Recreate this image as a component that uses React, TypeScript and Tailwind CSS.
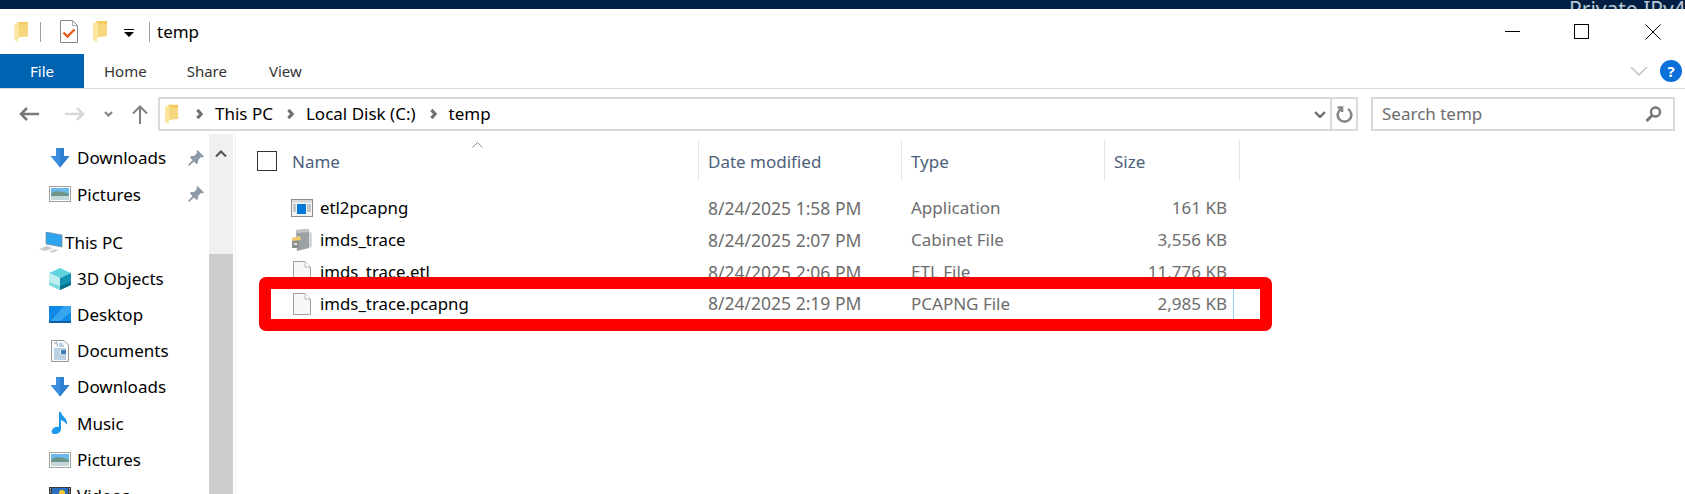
import React from 'react';

const font = { fontFamily: '"Noto Sans", "Open Sans", sans-serif' };

const FolderIcon = ({ className }: { className: string }) => (
  <svg className={className} viewBox="0 0 15 21">
    <path d="M3 0 H14 V15 L3 16 Z" fill="#f3cb60" />
    <path d="M0 2 L5 1 V17 L4 17 V21 L0 19 Z" fill="#fce6a0" />
    <path d="M5 3 H14 V15 L5 16 Z" fill="#f7d77e" />
  </svg>
);

const CheckDocIcon = () => (
  <svg className="h-[23px] w-[18px]" viewBox="0 0 18 23" fill="none">
    <path d="M.5.5 H12.5 L17.5 5.5 V22.5 H.5 Z" fill="#fff" stroke="#858585" />
    <path d="M12.5.5 V5.5 H17.5" stroke="#a8a8a8" />
    <path d="M3.5 12.5 L7.5 16.5 L14.5 9.5" stroke="#ea5a20" strokeWidth="2.4" />
  </svg>
);

const BlankFileIcon = () => (
  <svg className="h-[22px] w-[18px]" viewBox="0 0 18 22" fill="none">
    <path d="M.5.5 H12 L17.5 6 V21.5 H.5 Z" fill="#f7f8f8" stroke="#a0a0a0" />
    <path d="M12 .5 V6 H17.5" fill="#fff" stroke="#b4b4b4" />
  </svg>
);

const AppIcon = () => (
  <svg className="h-[18px] w-[22px]" viewBox="0 0 22 18">
    <rect x=".5" y=".5" width="21" height="17" fill="#f2f2f2" stroke="#8b8b8b" />
    <rect x="1" y="1" width="20" height="2.5" fill="#d8d8d8" />
    <rect x="6" y="5" width="9" height="10" fill="#0078d7" />
    <path d="M2 6h3M2 8h3M2 10h3M2 12h3M16 6h4M16 8h4M16 10h4M16 12h4" stroke="#9a9a9a" />
  </svg>
);

const CabinetIcon = () => (
  <svg className="h-[22px] w-[22px]" viewBox="0 0 22 22">
    <path d="M5 1 L18 0 V19 L6 22 Z" fill="#9aa0a3" />
    <path d="M5 1 L18 0 L18 3 L6 4 Z" fill="#c3c7c9" />
    <path d="M18 2 L21 4 V18 L18 19 Z" fill="#d5d7d8" />
    <path d="M1 9 L8 8 V19 L1 19 Z" fill="#8c8f8e" />
    <path d="M1 9 L9 7 L10 11 L1 12 Z" fill="#f2cd6d" />
    <rect x="3" y="14" width="3" height="2" fill="#e6e6e6" />
  </svg>
);

const DownloadIcon = () => (
  <svg className="h-[20px] w-[20px]" viewBox="0 0 20 20">
    <path d="M6 0 H14 V8 H19.5 L10 19.5 L.5 8 H6 Z" fill="#3a8fe0" />
    <path d="M10 0 H14 V8 H19.5 L10 19.5 Z" fill="#2f80d0" />
  </svg>
);

const PicturesIcon = () => (
  <svg className="h-[16px] w-[22px]" viewBox="0 0 22 16">
    <rect x=".5" y=".5" width="21" height="15" fill="#fff" stroke="#a3a3a3" />
    <rect x="2" y="2" width="18" height="6" fill="#6cb8e8" />
    <path d="M2 8 C6 4 12 5 20 8 V10 H2 Z" fill="#6f9488" />
    <rect x="2" y="10" width="18" height="4" fill="#c2d6dc" />
  </svg>
);

const ObjectsIcon = () => (
  <svg className="h-[22px] w-[22px]" viewBox="0 0 22 22">
    <path d="M11 0 L22 5 L11 10 L0 5 Z" fill="#5fd3e0" />
    <path d="M0 5 L11 10 V22 L0 17 Z" fill="#bfeef0" />
    <path d="M22 5 L11 10 V22 L22 17 Z" fill="#1392b5" />
    <path d="M0 14 L11 18 V22 L0 17 Z" fill="#7fdbe2" />
    <path d="M22 14 L11 18 V22 L22 17 Z" fill="#0b6f8e" />
  </svg>
);

const DesktopIcon = () => (
  <svg className="h-[17px] w-[22px]" viewBox="0 0 22 17">
    <rect width="22" height="17" fill="#0e8ae6" />
    <path d="M0 17 L15 0 H22 V6 L9 17 Z" fill="#36a6f0" />
    <rect y="15" width="22" height="2" fill="#0a5fa8" />
  </svg>
);

const DocumentsIcon = () => (
  <svg className="h-[22px] w-[18px]" viewBox="0 0 18 22" fill="none">
    <path d="M.5.5 H13 L17.5 5 V21.5 H.5 Z" fill="#fafafa" stroke="#9a9a9a" />
    <path d="M3 4l2.5-2 1 4M8 4h4M8 6h5M3 9h12M3 11h6M3 13h6M3 15h12M3 17h12M3 19h12" stroke="#7fa6cf" />
    <rect x="10" y="10" width="5" height="4" fill="#3f7fb5" />
  </svg>
);

const MusicIcon = () => (
  <svg className="h-[22px] w-[18px]" viewBox="0 0 18 22">
    <path d="M8 0 H10 C10 4 17 6 16 13 C15 11 13 9 10 8 V17 C10 20 7 22 4 22 C1 22 0 20 1 18 C2 16 5 14 8 15 Z" fill="#1d97ea" />
  </svg>
);

const VideosIcon = () => (
  <svg className="h-[18px] w-[22px]" viewBox="0 0 22 18">
    <rect width="22" height="18" fill="#3a3a3a" />
    <rect x="3" y="1" width="16" height="16" fill="#2a6fc0" />
    <rect x="3" y="9" width="8" height="8" fill="#d9482b" />
    <rect x="11" y="7" width="8" height="10" fill="#3f9a3a" />
    <circle cx="13" cy="6" r="3" fill="#f5c92f" />
    <path d="M1 2h1M1 5h1M1 8h1M1 11h1M1 14h1M20 2h1M20 5h1M20 8h1M20 11h1M20 14h1" stroke="#fff" />
  </svg>
);

const PinIcon = () => (
  <svg className="h-[16px] w-[16px]" viewBox="0 0 16 16">
    <path d="M9.5 0 L16 6.5 L14.5 7.5 L13 7 L10 10 L10 13 L8.5 14 L2 7.5 L3 6 L6 6 L9 3 L8.5 1.5 Z M4.5 10 L6 11.5 L1 16 L0 15 Z" fill="#8c99a6" />
  </svg>
);

const ThisPcIcon = () => (
  <svg className="h-[21px] w-[24px]" viewBox="0 0 24 21">
    <path d="M7 0 L23 3 V15 L7 12 Z" fill="#2fa4ee" stroke="#7b8a96" strokeWidth=".7" />
    <path d="M0 17 L8 14 L14 16 L6 19 Z" fill="#c9c9c9" />
    <path d="M10 19 L16 17 L20 18 L14 21 Z" fill="#d5d5d5" />
  </svg>
);

const Arrow = ({ className, color, flip }: { className: string; color: string; flip?: boolean }) => (
  <svg className={className} viewBox="0 0 20 14" fill="none" stroke={color} strokeWidth="2.6">
    <path d={flip ? 'M0 7 H18 M12 1 L18 7 L12 13' : 'M20 7 H2 M8 1 L2 7 L8 13'} />
  </svg>
);

const Chevron = ({ className }: { className: string }) => (
  <svg className={className} viewBox="0 0 8 12" fill="none" stroke="#707070" strokeWidth="3.8">
    <path d="M1.5 1 L6 6 L1.5 11" />
  </svg>
);

const sideItems = [
  { label: 'Downloads', icon: <DownloadIcon />, pin: true },
  { label: 'Pictures', icon: <PicturesIcon />, pin: true },
  { label: 'spacer' },
  { label: 'This PC', icon: <ThisPcIcon />, root: true },
  { label: '3D Objects', icon: <ObjectsIcon /> },
  { label: 'Desktop', icon: <DesktopIcon /> },
  { label: 'Documents', icon: <DocumentsIcon /> },
  { label: 'Downloads', icon: <DownloadIcon /> },
  { label: 'Music', icon: <MusicIcon /> },
  { label: 'Pictures', icon: <PicturesIcon /> },
  { label: 'Videos', icon: <VideosIcon /> },
];

const files = [
  { name: 'etl2pcapng', date: '8/24/2025 1:58 PM', type: 'Application', size: '161 KB', icon: <AppIcon /> },
  { name: 'imds_trace', date: '8/24/2025 2:07 PM', type: 'Cabinet File', size: '3,556 KB', icon: <CabinetIcon /> },
  { name: 'imds_trace.etl', date: '8/24/2025 2:06 PM', type: 'ETL File', size: '11,776 KB', icon: <BlankFileIcon /> },
  { name: 'imds_trace.pcapng', date: '8/24/2025 2:19 PM', type: 'PCAPNG File', size: '2,985 KB', icon: <BlankFileIcon /> },
];

export default function App() {
  return (
    <div className="relative h-[494px] w-[1685px] overflow-hidden bg-white text-black" style={font}>
      {/* Desktop strip behind the window */}
      <div className="flex h-[9px] justify-start overflow-hidden bg-[#001f42] pl-[1569px]">
        <span className="-mt-[4px] whitespace-nowrap text-[21px] leading-[26px] text-[#b8c6d6]">Private IPv4</span>
      </div>

      {/* Title bar */}
      <div className="flex h-[45px] items-center">
        <div className="flex w-[40px] justify-center pl-[2px]">
          <FolderIcon className="h-[20px] w-[15px]" />
        </div>
        <div className="h-[20px] w-px bg-[#a0a0a0]" />
        <div className="ml-[19px]"><CheckDocIcon /></div>
        <div className="ml-[15px]"><FolderIcon className="h-[21px] w-[15px]" /></div>
        <div className="ml-[16px] flex flex-col items-center gap-[2px] pt-[3px]">
          <div className="h-px w-[10px] bg-black" />
          <div className="h-0 w-0 border-x-[5px] border-t-[5px] border-x-transparent border-t-black" />
        </div>
        <div className="ml-[15px] h-[20px] w-px bg-[#a0a0a0]" />
        <span className="ml-[7px] text-[17px]">temp</span>
        <div className="ml-auto flex items-center">
          <div className="h-px w-[15px] bg-black" />
          <div className="ml-[54px] h-[15px] w-[15px] border border-black" />
          <svg className="ml-[56px] mr-[24px] h-[16px] w-[16px]" viewBox="0 0 16 16" stroke="#000" fill="none">
            <path d="M.5.5 L15.5 15.5 M15.5.5 L.5 15.5" />
          </svg>
        </div>
      </div>

      {/* Ribbon tabs */}
      <div className="flex h-[35px] items-center border-b border-[#dadbdc]">
        <div className="flex h-[34px] w-[84px] items-center justify-center bg-[#0063b1] text-[15px] text-white">File</div>
        <span className="ml-[20px] text-[15px] text-[#333]">Home</span>
        <span className="ml-[40px] text-[15px] text-[#333]">Share</span>
        <span className="ml-[42px] text-[15px] text-[#333]">View</span>
        <div className="ml-auto flex items-center pr-[3px]">
          <svg className="h-[10px] w-[18px]" viewBox="0 0 18 10" fill="none" stroke="#c4c4c4" strokeWidth="1.5">
            <path d="M1 1 L9 9 L17 1" />
          </svg>
          <div className="ml-[12px] flex h-[22px] w-[22px] items-center justify-center rounded-full bg-[#0a6fd8] text-[15px] font-bold text-white">?</div>
        </div>
      </div>

      {/* Address row */}
      <div className="flex h-[45px] items-center pb-[3px] pt-[8px]">
        <Arrow className="ml-[19px] h-[14px] w-[20px]" color="#7a7a7a" />
        <Arrow className="ml-[26px] h-[14px] w-[20px]" color="#d8d8d8" flip />
        <svg className="ml-[19px] h-[6px] w-[9px]" viewBox="0 0 9 6" fill="none" stroke="#808080" strokeWidth="2">
          <path d="M1 1 L4.5 4.5 L8 1" />
        </svg>
        <svg className="ml-[19px] h-[19px] w-[16px]" viewBox="0 0 16 19" fill="none" stroke="#808080" strokeWidth="2">
          <path d="M8 19 V2 M1 8.5 L8 1.5 L15 8.5" />
        </svg>
        <div className="ml-[10px] flex h-[34px] w-[1200px] items-center border-2 border-[#dadada]">
          <FolderIcon className="ml-[5px] h-[21px] w-[14px]" />
          <Chevron className="ml-[17px] h-[10px] w-[7px]" />
          <span className="ml-[12px] text-[17px]">This PC</span>
          <Chevron className="ml-[14px] h-[10px] w-[7px]" />
          <span className="ml-[12px] text-[17px]">Local Disk (C:)</span>
          <Chevron className="ml-[14px] h-[10px] w-[7px]" />
          <span className="ml-[12px] text-[17px]">temp</span>
          <svg className="ml-auto mr-[4px] h-[7px] w-[12px]" viewBox="0 0 12 7" fill="none" stroke="#707070" strokeWidth="2.4">
            <path d="M1 1 L6 6 L11 1" />
          </svg>
          <div className="flex h-full w-[26px] items-center justify-center border-l-2 border-[#dadada]">
            <svg className="h-[17px] w-[17px]" viewBox="0 0 17 17" fill="none" stroke="#858585" strokeWidth="2.6">
              <path d="M5 3 A6.8 6.8 0 1 0 12 3" />
              <path d="M1.5 1.5 H6 V6" />
            </svg>
          </div>
        </div>
        <div className="ml-[13px] flex h-[34px] w-[304px] items-center border-2 border-[#dadada] pl-[9px] pr-[11px]">
          <span className="text-[17px] text-[#6d6d6d]">Search temp</span>
          <svg className="ml-auto h-[16px] w-[17px]" viewBox="0 0 17 16" fill="none" stroke="#777" strokeWidth="2.4">
            <circle cx="10.5" cy="6" r="4.5" />
            <path d="M7 9.5 L1.5 15" strokeWidth="3" />
          </svg>
        </div>
      </div>

      <div className="flex h-[360px]">
        {/* Navigation pane */}
        <div className="flex w-[209px] flex-col pt-[6px]">
          {sideItems.map((item, i) =>
            item.label === 'spacer' ? (
              <div key={i} className="h-[12px] shrink-0" />
            ) : (
              <div key={i} className="flex h-[36.2px] shrink-0 items-center">
                <div className={item.root ? 'ml-[37px] flex w-[27px] justify-center' : 'ml-[49px] flex w-[22px] justify-center'}>{item.icon}</div>
                <span className={item.root ? 'ml-[1px] text-[17px]' : 'ml-[6px] text-[17px]'}>{item.label}</span>
                {item.pin && <div className="ml-auto mr-[5px]"><PinIcon /></div>}
              </div>
            ),
          )}
        </div>

        {/* Scrollbar */}
        <div className="flex w-[24px] flex-col">
          <div className="flex h-[120px] justify-center bg-[#f0f0f0] pt-[16px]">
            <svg className="h-[7px] w-[12px]" viewBox="0 0 12 7" fill="none" stroke="#505050" strokeWidth="2">
              <path d="M1 6.5 L6 1.5 L11 6.5" />
            </svg>
          </div>
          <div className="flex-1 bg-[#cdcdcd]" />
        </div>
        <div className="ml-[2px] h-full w-px bg-[#f0f0f0]" />

        {/* File list */}
        <div className="flex-1 pt-[6px]">
          <div className="relative flex h-[41px] items-center text-[17px] text-[#4c607a]">
            <div className="ml-[21px] h-[20px] w-[20px] border border-[#333]" />
            <span className="ml-[15px] w-[406px] pt-[2px]">Name</span>
            <div className="h-full w-px bg-[#e5e5e5]" />
            <span className="ml-[9px] w-[193px] pt-[2px]">Date modified</span>
            <div className="h-full w-px bg-[#e5e5e5]" />
            <span className="ml-[9px] w-[193px] pt-[2px]">Type</span>
            <div className="h-full w-px bg-[#e5e5e5]" />
            <span className="ml-[9px] w-[125px] pt-[2px]">Size</span>
            <div className="h-full w-px bg-[#e5e5e5]" />
            <svg className="absolute left-[236px] top-[2px] h-[6px] w-[11px]" viewBox="0 0 11 6" fill="none" stroke="#909090">
              <path d="M.5 5.5 L5.5 .5 L10.5 5.5" />
            </svg>
          </div>
          <div className="mt-[11px] flex flex-col">
            {files.map((f, i) => (
              <div key={f.name} className={i === 3 ? 'ml-[35px] flex h-[32px] w-[963px] items-center border-b border-r border-[#99d1ff]' : 'ml-[35px] flex h-[32px] w-[963px] items-center'}>
                <div className="ml-[20px] flex w-[22px] justify-center">{f.icon}</div>
                <span className="ml-[7px] w-[388px] text-[16.8px]">{f.name}</span>
                <span className="w-[203px] text-[17.5px] text-[#6d6d6d]">{f.date}</span>
                <span className="w-[190px] text-[17px] text-[#6d6d6d]">{f.type}</span>
                <span className="w-[126px] text-right text-[17px] text-[#6d6d6d]">{f.size}</span>
              </div>
            ))}
          </div>
        </div>
      </div>

      {/* Red annotation box */}
      <div className="absolute left-[259px] top-[277px] h-[54px] w-[1013px] rounded-[7px] border-[12px] border-[#ff0000]" />
    </div>
  );
}
